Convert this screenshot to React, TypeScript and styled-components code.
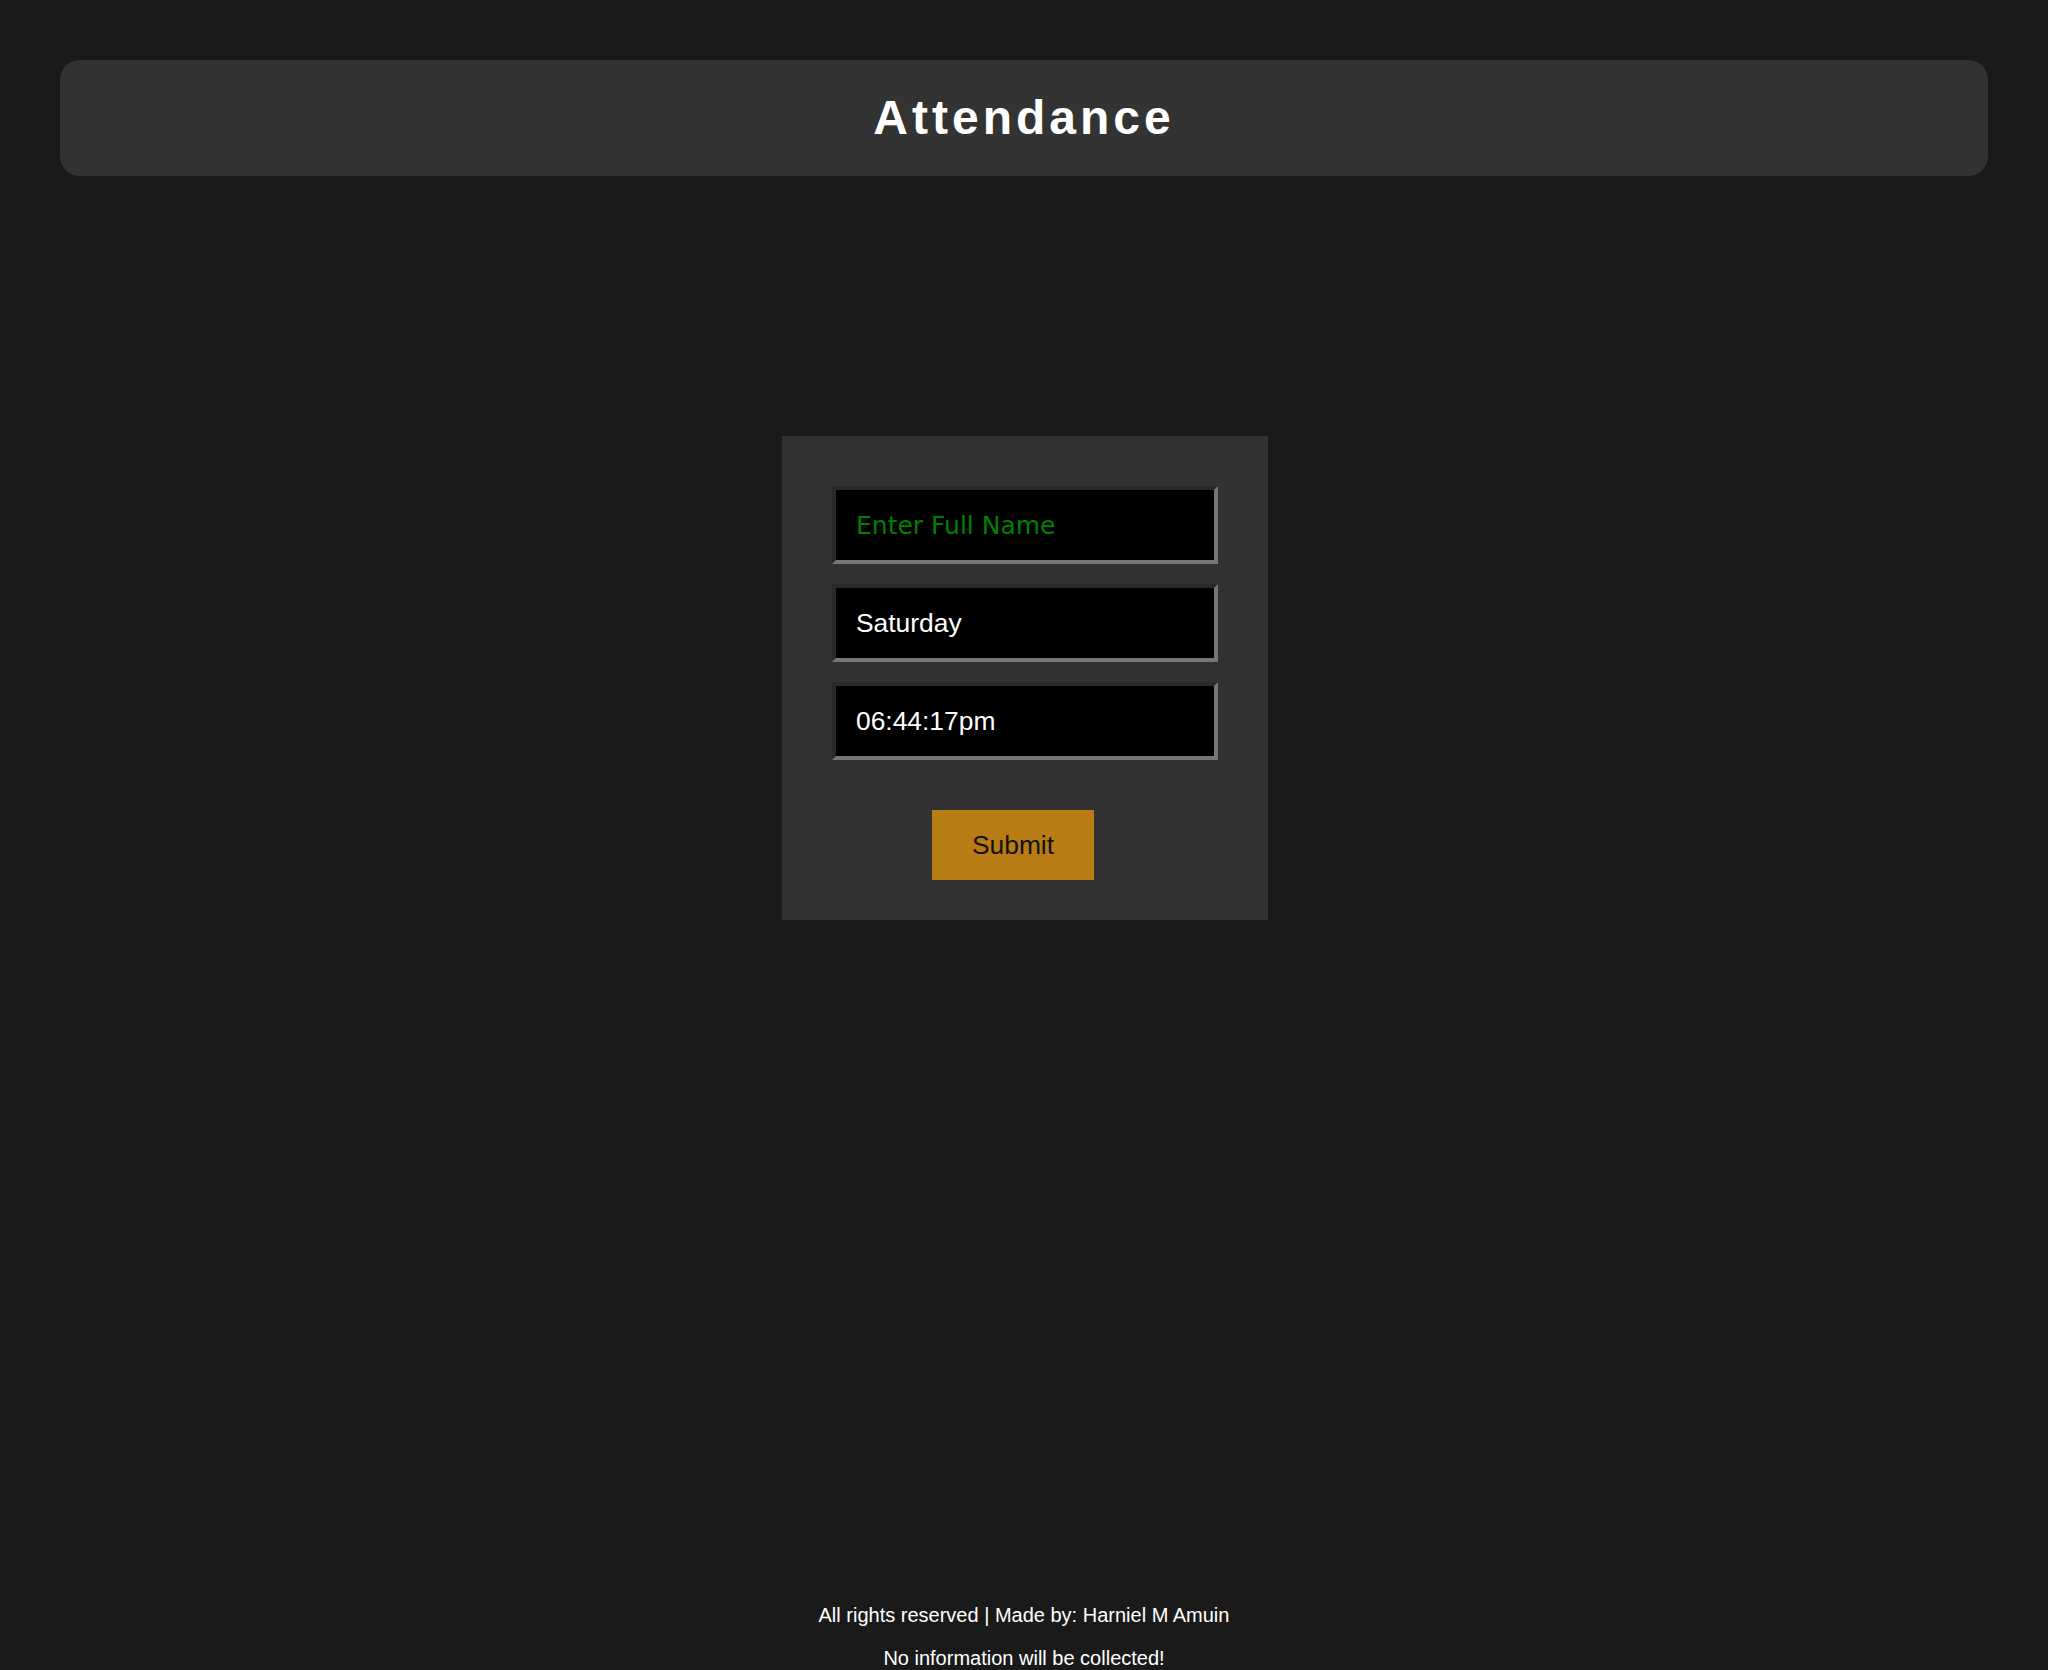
import React from "react";
import styled, { createGlobalStyle } from "styled-components";

const GlobalStyle = createGlobalStyle`
  html, body {
    margin: 0;
    padding: 0;
    background: #1a1a1a;
    font-family: "Liberation Sans", Arial, sans-serif;
  }
  * { box-sizing: border-box; }
`;

const Page = styled.div`
  min-height: 100vh;
  display: flex;
  flex-direction: column;
`;

const Header = styled.header`
  margin: 60px 60px 0;
  height: 116px;
  background: #333333;
  border-radius: 20px;
  display: flex;
  align-items: center;
  justify-content: center;
`;

const Title = styled.h1`
  margin: 0;
  color: #ffffff;
  font-family: "Liberation Sans", Arial, sans-serif;
  font-weight: 700;
  font-size: 48px;
  letter-spacing: 4px;
  line-height: 1;
`;

const Main = styled.main`
  display: flex;
  justify-content: center;
  padding-top: 260px;
  padding-left: 2px;
`;

const Form = styled.form`
  width: 486px;
  background: #323232;
  padding: 50px 50px 40px;
  display: flex;
  flex-direction: column;
  gap: 20px;
`;

const Field = styled.input`
  width: 386px;
  height: 78px;
  background: #000000;
  color: #ffffff;
  border-style: solid;
  border-width: 4px;
  border-color: #2a2a2a #767676 #767676 #2a2a2a;
  padding: 0 20px;
  font-family: "Liberation Sans", Arial, sans-serif;
  font-size: 26.4px;
  outline: none;
  &::placeholder {
    color: #008000;
    opacity: 1;
    font-family: "Comic Sans MS", "DejaVu Sans", sans-serif;
    font-size: 25px;
  }
`;

const ButtonRow = styled.div`
  display: flex;
  justify-content: center;
  margin-top: 30px;
  padding-right: 24px;
`;

const SubmitButton = styled.button`
  width: 162px;
  height: 70px;
  background: #b87c15;
  color: #111111;
  border: none;
  font-family: "Liberation Sans", Arial, sans-serif;
  font-size: 26.4px;
  cursor: pointer;
`;

const Footer = styled.footer`
  margin-top: auto;
  text-align: center;
  color: #ffffff;
`;

const FooterLine = styled.p`
  margin: 0;
  font-family: "Liberation Sans", Arial, sans-serif;
  font-size: 20px;
  line-height: 23px;
  & + & {
    margin-top: 20px;
  }
`;

export default function App() {
  return (
    <>
      <GlobalStyle />
      <Page>
        <Header>
          <Title>Attendance</Title>
        </Header>
        <Main>
          <Form onSubmit={(e) => e.preventDefault()}>
            <Field type="text" placeholder="Enter Full Name" />
            <Field type="text" value="Saturday" readOnly />
            <Field type="text" value="06:44:17pm" readOnly />
            <ButtonRow>
              <SubmitButton type="submit">Submit</SubmitButton>
            </ButtonRow>
          </Form>
        </Main>
        <Footer>
          <FooterLine>All rights reserved | Made by: Harniel M Amuin</FooterLine>
          <FooterLine>No information will be collected!</FooterLine>
        </Footer>
      </Page>
    </>
  );
}
